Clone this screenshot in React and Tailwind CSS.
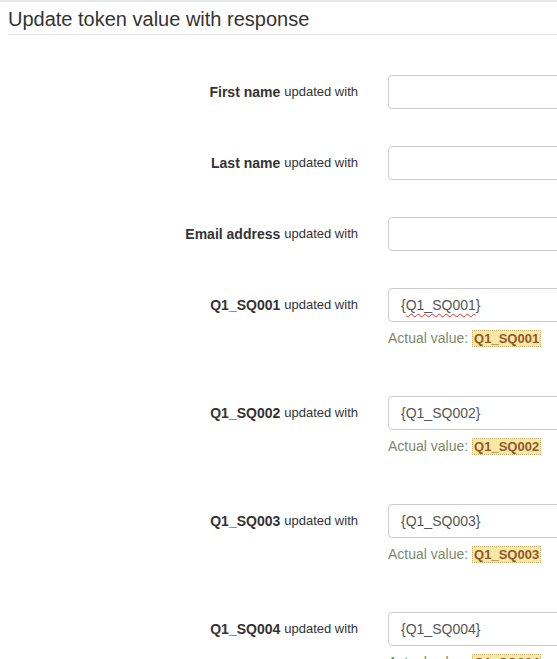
import React from "react";

const fields = [
  { name: "First name", value: "" },
  { name: "Last name", value: "" },
  { name: "Email address", value: "" },
  { name: "Q1_SQ001", value: "Q1_SQ001", actual: "Q1_SQ001", spell: true },
  { name: "Q1_SQ002", value: "Q1_SQ002", actual: "Q1_SQ002" },
  { name: "Q1_SQ003", value: "Q1_SQ003", actual: "Q1_SQ003" },
  { name: "Q1_SQ004", value: "Q1_SQ004", actual: "Q1_SQ004" },
];

const FieldRow = ({ field }) => {
  return (
    <div className="flex">
      {/* Label column */}
      <div className="w-[373px] shrink-0 pr-[15px] h-[34px] flex items-center justify-end text-[#333]">
        <span className="text-[14px] font-bold">{field.name}</span>
        <span className="text-[13px] ml-[4px]">updated with</span>
      </div>

      {/* Input column */}
      <div className="pl-[15px] shrink-0 w-[400px]">
        <div className="h-[34px] border border-[#ccc] rounded-[4px] bg-white px-[12px] flex items-center text-[14px] text-[#555]">
          {field.value ? (
            <span>
              {"{"}
              {field.spell ? (
                <span className="underline decoration-wavy decoration-[#e03030] decoration-[1px] underline-offset-[3px]">
                  {field.value}
                </span>
              ) : (
                field.value
              )}
              {"}"}
            </span>
          ) : null}
        </div>
        {field.actual ? (
          <div className="h-[37px] pt-[6px] text-[14px] leading-[20px] text-[#7b8a6e]">
            Actual value:{" "}
            <span className="bg-[#f5e9a6] border border-dotted border-[#c9b36a] px-[1px] text-[13px] font-bold text-[#94562a]">
              {field.actual}
            </span>
          </div>
        ) : null}
      </div>
    </div>
  );
};

const App = () => {
  return (
    <div
      className="w-[557px] h-[659px] overflow-hidden bg-white border-t-2 border-[#e8e8e8]"
      style={{ fontFamily: '"Liberation Sans", Arial, sans-serif' }}
    >
      <div className="pl-[8px]">
        <h3 className="pt-[6px] pb-[4px] border-b border-[#e5e5e5] text-[20px] leading-[22px] text-[#333]">
          Update token value with response
        </h3>
      </div>

      <div className="pt-[40px] flex flex-col gap-[37px]">
        {fields.map((field) => (
          <FieldRow key={field.name} field={field} />
        ))}
      </div>
    </div>
  );
};

export default App;
